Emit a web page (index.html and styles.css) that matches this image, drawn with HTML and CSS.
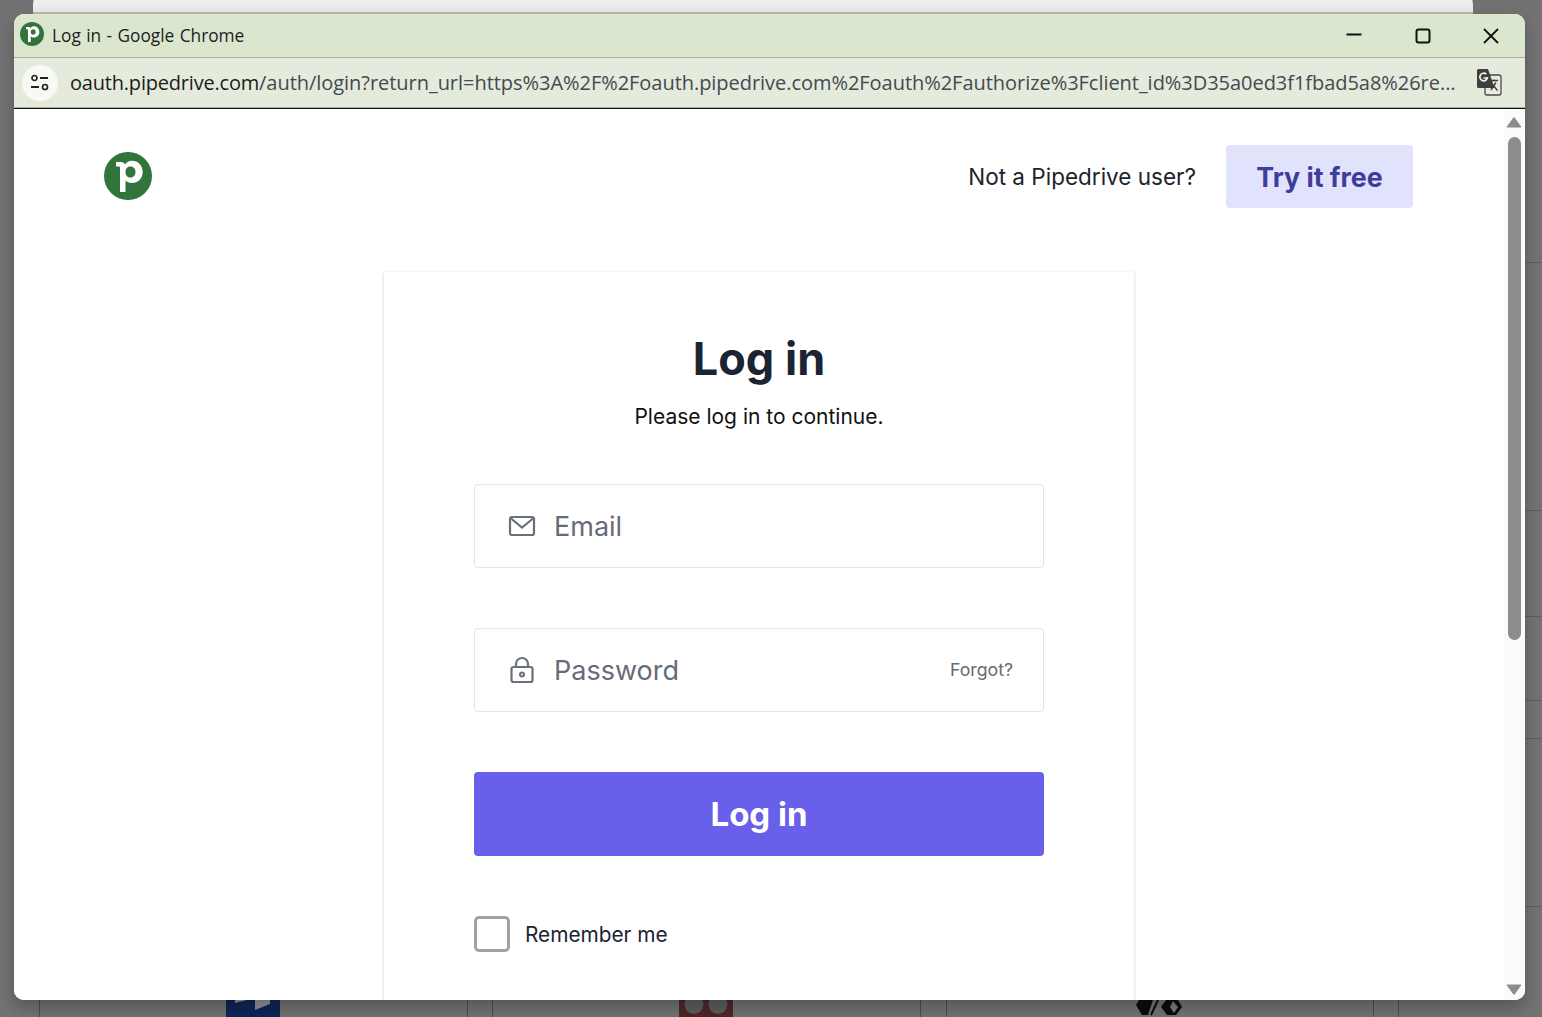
FILE: index.html
```html
<!DOCTYPE html>
<html lang="en">
<head>
<meta charset="utf-8">
<title>Log in - Google Chrome</title>
<link rel="stylesheet" href="styles.css">
</head>
<body>
<div class="desktop">
  <div class="backdrop-window"></div>
  <i class="hline hl1"></i><i class="hline hl2"></i><i class="hline hl3"></i><i class="hline hl4"></i><i class="hline hl5"></i><i class="hline hl6"></i>
  <i class="vline vl1"></i><i class="vline vl2"></i><i class="vline vl3"></i><i class="vline vl4"></i><i class="vline vl5"></i><i class="vline vl6"></i><i class="vline vl7"></i>
  <div class="peek peek-blue"><svg width="54" height="17" viewBox="0 0 54 17"><path d="M9 0V3L21 0zM29 0V10L44 4V0z" fill="#8f8f8f"/></svg></div>
  <div class="peek peek-red"><svg width="54" height="17" viewBox="0 0 54 17"><circle cx="15" cy="4.500" r="9.500" fill="#5c5c5c"/><circle cx="39" cy="4.500" r="9.500" fill="#5c5c5c"/></svg></div>
  <div class="peek peek-black"><svg width="50" height="17" viewBox="0 0 50 17"><path d="M2 5 5 0H19L14 15H8z" fill="#0c0c0c"/><path d="M17 15 24 0" fill="none" stroke="#0c0c0c" stroke-width="2"/><path d="M27 7 32 0H44L48 7 42 15H33z" fill="#0c0c0c"/><path d="M39 1 44 7 40 13 36 7z" fill="#7a7a7a"/></svg></div>

  <div class="window">
    <header class="titlebar">
      <svg class="favicon" width="24" height="24" viewBox="0 0 48 48"><circle cx="24" cy="24" r="24" fill="#33733c"/><path fill-rule="evenodd" d="M12 10H17C19 10 20.500 11 21 12.500 22.500 10 25 8.700 28 8.700 34 8.700 38.700 13.500 38.700 20 38.700 26.500 34 31 28 31 25 31 22.800 30 21.500 28.500V40H16V16C16 15 15.500 14.500 14.500 14.500H12ZM21.500 20C21.500 23 23 25.500 26.200 25.500 29.200 25.500 31.500 23.500 31.500 20 31.500 16.500 29.200 14.500 26.200 14.500 23 14.500 21.500 17 21.500 20Z" fill="#fff"/></svg>
      <span class="title-text">Log in - Google Chrome</span>
      <div class="win-controls">
        <svg width="18" height="18" viewBox="0 0 18 18"><path d="M1.500 7.500h15" stroke="#111" stroke-width="2"/></svg>
        <svg width="18" height="18" viewBox="0 0 18 18"><rect x="2.500" y="2.500" width="13" height="13" rx="2" fill="none" stroke="#111" stroke-width="2"/></svg>
        <svg width="18" height="18" viewBox="0 0 18 18"><path d="M2 2l14 14M16 2 2 16" stroke="#111" stroke-width="1.800"/></svg>
      </div>
    </header>
    <div class="toolbar">
      <div class="site-button">
        <svg width="20" height="18" viewBox="0 0 20 18"><circle cx="4.500" cy="4" r="2.500" fill="none" stroke="#222" stroke-width="1.700"/><path d="M10 4h8M1 13h8" stroke="#222" stroke-width="1.800"/><circle cx="15" cy="13" r="2.500" fill="none" stroke="#222" stroke-width="1.700"/></svg>
      </div>
      <div class="url"><span class="url-host">oauth.pipedrive.com</span><span class="url-path">/auth/login?return_url=https%3A%2F%2Foauth.pipedrive.com%2Foauth%2Fauthorize%3Fclient_id%3D35a0ed3f1fbad5a8%26re...</span></div>
      <svg class="translate" width="26" height="27" viewBox="0 0 26 27"><rect x="9" y="6" width="16" height="20" rx="2" fill="#e8ecdf" stroke="#4a4a4a" stroke-width="1.300"/><path d="M2.500 0h9.500l6.500 19H2.500A1.500 1.500 0 0 1 1 17.500V1.500A1.500 1.500 0 0 1 2.500 0z" fill="#3f3f3f"/><path d="M11.500 8a3.800 3.800 0 1 1-1.200-2.800M7.500 9h4" fill="none" stroke="#f2f4ec" stroke-width="1.700"/><path d="M14 11.500h8M18 10.500v2M15 21l5-7.500M16 15l5.500 6.500" fill="none" stroke="#3f3f3f" stroke-width="1.400"/></svg>
    </div>
    <div class="viewport">
      <main class="page">
        <div class="topbar">
          <svg class="logo" width="48" height="48" viewBox="0 0 48 48"><circle cx="24" cy="24" r="24" fill="#33733c"/><path fill-rule="evenodd" d="M12 10H17C19 10 20.500 11 21 12.500 22.500 10 25 8.700 28 8.700 34 8.700 38.700 13.500 38.700 20 38.700 26.500 34 31 28 31 25 31 22.800 30 21.500 28.500V40H16V16C16 15 15.500 14.500 14.500 14.500H12ZM21.500 20C21.500 23 23 25.500 26.200 25.500 29.200 25.500 31.500 23.500 31.500 20 31.500 16.500 29.200 14.500 26.200 14.500 23 14.500 21.500 17 21.500 20Z" fill="#fff"/></svg>
          <div class="signup">
            <span class="signup-text">Not a Pipedrive user?</span>
            <a class="try-btn">Try it free</a>
          </div>
        </div>
        <section class="card">
          <h1 class="card-title">Log in</h1>
          <p class="card-sub">Please log in to continue.</p>
          <div class="field">
            <svg class="field-icon" width="28" height="28" viewBox="0 0 28 28"><rect x="2" y="5" width="24" height="18" rx="2" fill="none" stroke="#6a707b" stroke-width="2.200"/><path d="M3 6.500 14 15.500 25 6.500" fill="none" stroke="#6a707b" stroke-width="2.200"/></svg>
            <span class="placeholder">Email</span>
          </div>
          <div class="field">
            <svg class="field-icon" width="28" height="28" viewBox="0 0 28 28"><rect x="3.500" y="11" width="21" height="15" rx="2" fill="none" stroke="#6a707b" stroke-width="2.200"/><path d="M8 11V8a6 6 0 0 1 12 0v3" fill="none" stroke="#6a707b" stroke-width="2.200"/><circle cx="14" cy="18.500" r="2" fill="none" stroke="#6a707b" stroke-width="2"/></svg>
            <span class="placeholder">Password</span>
            <span class="forgot">Forgot?</span>
          </div>
          <button class="login-btn">Log in</button>
          <label class="remember"><span class="checkbox"></span><span>Remember me</span></label>
        </section>
      </main>
      <div class="scrollbar">
        <svg class="arrow" width="16" height="12" viewBox="0 0 16 12"><path d="M8 1.500 15 11H1z" fill="#8c8c8c" stroke="#8c8c8c" stroke-linejoin="round"/></svg>
        <div class="thumb"></div>
        <div class="track"></div>
        <svg class="arrow" width="16" height="12" viewBox="0 0 16 12"><path d="M1 1h14L8 10.500z" fill="#8c8c8c" stroke="#8c8c8c" stroke-linejoin="round"/></svg>
      </div>
    </div>
  </div>
</div>
</body>
</html>
```
FILE: styles.css
```css
* { box-sizing: border-box; }
html, body { margin: 0; padding: 0; height: 100%; overflow: hidden; }
body { font-family: "Inter", "Liberation Sans", sans-serif; }

.desktop {
  position: relative;
  width: 1542px;
  height: 1017px;
  overflow: hidden;
  background: #727272;
}
.backdrop-window {
  position: absolute;
  left: 33px; top: -20px;
  width: 1440px; height: 34px;
  background: linear-gradient(#fbfbfb, #e8e8e8);
  border-radius: 26px 26px 0 0;
  border-bottom: 2px solid #b9b9b9;
}
.hline { position: absolute; left: 1525px; right: 0; height: 1px; background: #5d5d5d; }
.hl1 { top: 262px; } .hl2 { top: 510px; } .hl3 { top: 616px; } .hl4 { top: 700px; } .hl5 { top: 738px; } .hl6 { top: 906px; }
.vline { position: absolute; top: 1000px; bottom: 0; width: 1px; background: #4d4d4d; }
.vl1 { left: 39px; } .vl2 { left: 467px; } .vl3 { left: 492px; } .vl4 { left: 920px; } .vl5 { left: 946px; } .vl6 { left: 1373px; } .vl7 { left: 1398px; }
.peek { position: absolute; top: 1000px; height: 17px; display: flex; }
.peek-blue { left: 226px; width: 54px; background: #0e2556; }
.peek-red { left: 679px; width: 54px; background: #4f2626; }
.peek-black { left: 1134px; width: 50px; }

.window {
  position: absolute;
  left: 14px; top: 14px;
  width: 1511px; height: 986px;
  border-radius: 10px;
  overflow: hidden;
  background: #fff;
  box-shadow: 0 8px 16px rgba(0,0,0,.24);
  display: flex;
  flex-direction: column;
}
.titlebar {
  height: 44px;
  flex: none;
  background: #dbe6cf;
  border-bottom: 1px solid #a9ada5;
  display: flex;
  align-items: center;
  padding-left: 6px;
  color: #1d1d1d;
}
.favicon { flex: none; margin-top: -3px; }
.title-text { margin-left: 8px; font: 17.300px "Open Sans", sans-serif; word-spacing: .9px; }
.win-controls { margin-left: auto; display: flex; gap: 50.500px; margin-right: 25px; }

.toolbar {
  height: 50px;
  flex: none;
  background: #e5ebdc;
  border-bottom: 1px solid #a9ada5;
  display: flex;
  align-items: center;
  padding: 0 23px 0 8px;
  position: relative;
}
.toolbar::after { content: ""; position: absolute; left: 0; right: 0; bottom: -2px; height: 1px; background: #111; }
.site-button {
  width: 36px; height: 36px;
  border-radius: 50%;
  background: #f7f9f2;
  display: flex; align-items: center; justify-content: center;
  flex: none;
}
.url { margin-left: 12px; margin-top: -1px; font: 20px "Open Sans", sans-serif; white-space: nowrap; flex: 1; overflow: hidden; }
.url-host { color: #1a1d20; letter-spacing: -.2px; }
.url-path { color: #434a50; letter-spacing: -.04px; }
.translate { flex: none; margin-top: -1px; }

.viewport { flex: 1; min-height: 0; display: flex; margin-top: 1px; background: #fff; }
.page { flex: 1; min-width: 0; overflow: hidden; }
.topbar {
  height: 163px;
  padding: 36px 91px 0 90px;
  display: flex;
  justify-content: space-between;
  align-items: flex-start;
}
.logo { margin-top: 7px; }
.signup { display: flex; align-items: center; gap: 30px; }
.signup-text { font-size: 22.500px; color: #21232c; }
.try-btn {
  display: flex; align-items: center; justify-content: center;
  width: 187px; height: 63px;
  border-radius: 4px;
  background: #e1e2fb;
  color: #3f3d9c;
  font-weight: 700;
  font-size: 26.800px;
}
.card {
  width: 750px;
  margin-left: 370px;
  height: 800px;
  padding: 63px 90px 0;
  background: #fff;
  box-shadow: 0 1px 3px rgba(0,0,0,.2);
  display: flex;
  flex-direction: column;
}
.card-title { margin: 0; text-align: center; font-size: 45px; font-weight: 700; line-height: 48px; color: #1b2433; }
.card-sub { margin: 19px 0 0; text-align: center; font-size: 21px; line-height: 30px; color: #111; }
.field {
  height: 84px;
  margin-top: 52px;
  border: 1px solid #e3e4e6;
  border-radius: 4px;
  display: flex;
  align-items: center;
  padding: 0 30px 0 33px;
}
.field + .field { margin-top: 60px; }
.field-icon { flex: none; }
.placeholder { margin-left: 18px; font-size: 27px; color: #656c78; }
.forgot { margin-left: auto; margin-top: -2px; font-size: 17.700px; color: #656c78; }
.login-btn {
  height: 84px;
  margin-top: 60px;
  border: 0;
  border-radius: 4px;
  background: #6860ea;
  color: #fff;
  font: 700 33px "Inter", sans-serif;
}
.remember { margin-top: 60px; display: flex; align-items: center; gap: 15px; font-size: 20.800px; color: #1b2433; }
.checkbox { width: 36px; height: 36px; border: 3px solid #9ea2a9; border-radius: 5px; flex: none; }

.scrollbar {
  width: 21px;
  flex: none;
  background: #fbfbfb;
  display: flex;
  flex-direction: column;
  align-items: center;
  padding: 7px 1px 4px 0;
}
.arrow { flex: none; }
.thumb { width: 13px; height: 503px; margin-top: 9px; border-radius: 7px; background: #8c8c8c; flex: none; }
.track { flex: 1; }
```
